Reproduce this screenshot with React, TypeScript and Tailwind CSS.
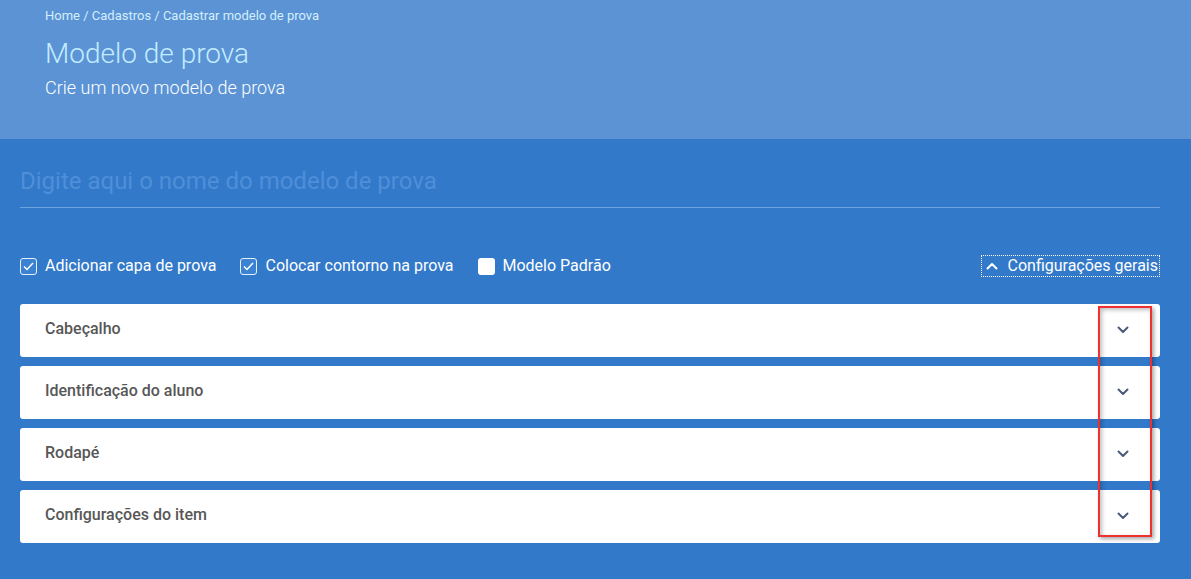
import React from "react";

const Chevron = ({ up = false, className = "" }: { up?: boolean; className?: string }) => (
  <svg width="12" height="8" viewBox="0 0 12 8" className={className}>
    <path
      d={up ? "M1.5 6.5 L6 2 L10.5 6.5" : "M1.5 1.5 L6 6 L10.5 1.5"}
      fill="none"
      stroke="currentColor"
      strokeWidth="2"
      strokeLinecap="round"
      strokeLinejoin="round"
    />
  </svg>
);

const Check = ({ checked, label }: { checked: boolean; label: string }) => (
  <label className="flex items-center gap-[8px] text-[16px] text-white">
    {checked ? (
      <span className="flex h-[17px] w-[17px] items-center justify-center rounded-[3px] border border-[#e6f0fb] bg-[#3b82d2]">
        <svg width="11" height="9" viewBox="0 0 11 9">
          <path d="M1 4.5 L4 7.5 L10 1" fill="none" stroke="white" strokeWidth="1.5" />
        </svg>
      </span>
    ) : (
      <span className="h-[17px] w-[17px] rounded-[3px] bg-white" />
    )}
    <span>{label}</span>
  </label>
);

const sections = ["Cabeçalho", "Identificação do aluno", "Rodapé", "Configurações do item"];

export default function App() {
  return (
    <div className="relative min-h-[579px] w-full bg-[#3279ca]" style={{ fontFamily: "Roboto, 'Open Sans', sans-serif" }}>
      <div className="h-[139px] bg-[#5b93d5] px-[45px] pt-[7px]">
        <div className="text-[13px] leading-[18px] text-[#d4eefc]">Home / Cadastros / Cadastrar modelo de prova</div>
        <div className="mt-[12px] text-[28px] font-light leading-[34px] text-[#c2ecff]">Modelo de prova</div>
        <div className="mt-[5px] text-[18px] font-light leading-[24px] text-white">Crie um novo modelo de prova</div>
      </div>
      <div className="pl-[20px] pr-[31px]">
        <div className="border-b border-[#6ca2de] pb-[10px] pt-[26px]">
          <div className="text-[24px] leading-[32px] text-[#4f8fd8]">Digite aqui o nome do modelo de prova</div>
        </div>
        <div className="mt-[46px] flex items-center justify-between">
          <div className="flex items-center gap-[24px]">
            <Check checked label="Adicionar capa de prova" />
            <Check checked label="Colocar contorno na prova" />
            <Check checked={false} label="Modelo Padrão" />
          </div>
          <button className="flex h-[22px] items-center gap-[10px] border border-dotted border-white pl-[4px] pr-[1px] text-[16px] text-white">
            <Chevron up className="text-white" />
            <span>Configurações gerais</span>
          </button>
        </div>
        <div className="mt-[26px] flex flex-col gap-[9px]">
          {sections.map((s) => (
            <div key={s} className="flex h-[53px] items-center justify-between rounded-[3px] bg-white pl-[25px] pr-[31px]">
              <span className="mb-[4px] text-[16px] font-medium text-[#575757]">{s}</span>
              <Chevron className="mb-[2px] text-[#4a5a78]" />
            </div>
          ))}
        </div>
      </div>
      <div className="pointer-events-none absolute left-[1098px] top-[306px] h-[231px] w-[54px] border-2 border-[#ee3030] shadow-[2px_2px_4px_rgba(0,0,0,0.35),inset_2px_2px_4px_rgba(0,0,0,0.25)]" />
    </div>
  );
}
